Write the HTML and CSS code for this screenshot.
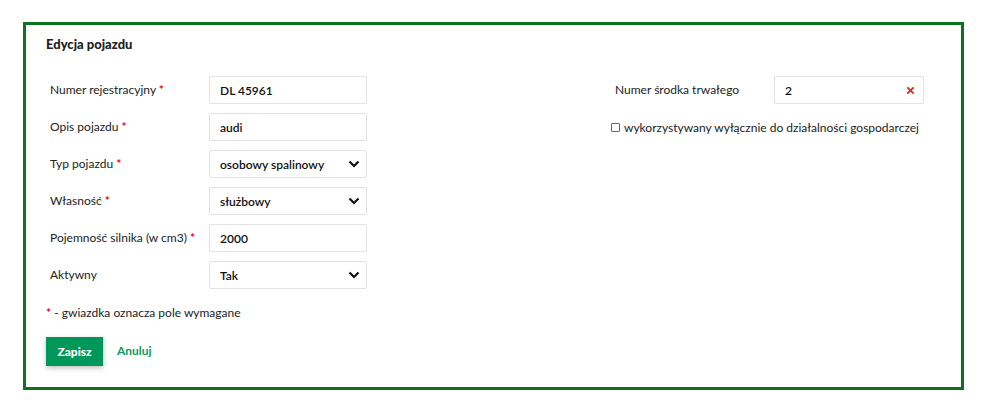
FILE: index.html
```html
<!DOCTYPE html>
<html lang="pl">
<head>
<meta charset="utf-8">
<link rel="stylesheet" href="styles.css">
</head>
<body>
<div class="panel">
  <h2 class="title">Edycja pojazdu</h2>
  <div class="form">
    <div class="col">
      <div class="row"><label class="lbl">Numer rejestracyjny <span class="req">*</span></label><div class="field">DL 45961</div></div>
      <div class="row"><label class="lbl">Opis pojazdu <span class="req">*</span></label><div class="field">audi</div></div>
      <div class="row"><label class="lbl">Typ pojazdu <span class="req">*</span></label><div class="field select">osobowy spalinowy<svg class="chev" viewBox="0 0 12 8" width="12" height="8"><path d="M1.5 1.5 L6 6 L10.5 1.5" fill="none" stroke="#111" stroke-width="2.2"/></svg></div></div>
      <div class="row"><label class="lbl">Własność <span class="req">*</span></label><div class="field select">służbowy<svg class="chev" viewBox="0 0 12 8" width="12" height="8"><path d="M1.5 1.5 L6 6 L10.5 1.5" fill="none" stroke="#111" stroke-width="2.2"/></svg></div></div>
      <div class="row"><label class="lbl">Pojemność silnika (w cm3) <span class="req">*</span></label><div class="field">2000</div></div>
      <div class="row"><label class="lbl">Aktywny</label><div class="field select">Tak<svg class="chev" viewBox="0 0 12 8" width="12" height="8"><path d="M1.5 1.5 L6 6 L10.5 1.5" fill="none" stroke="#111" stroke-width="2.2"/></svg></div></div>
    </div>
    <div class="col right">
      <div class="row"><label class="lbl">Numer środka trwałego</label><div class="field narrow">2<svg class="clear" viewBox="0 0 10 10" width="9" height="9"><path d="M1.5 1.5 L8.5 8.5 M8.5 1.5 L1.5 8.5" stroke="#e8271e" stroke-width="2"/></svg></div></div>
      <div class="check"><span class="box"></span>wykorzystywany wyłącznie do działalności gospodarczej</div>
    </div>
  </div>
  <p class="note"><span class="req">*</span> - gwiazdka oznacza pole wymagane</p>
  <div class="actions">
    <button class="btn">Zapisz</button>
    <a class="cancel">Anuluj</a>
  </div>
</div>
</body>
</html>
```
FILE: styles.css
```css
* { box-sizing: border-box; }
body {
  margin: 0;
  font-family: Lato, "Open Sans", sans-serif;
  font-size: 12px;
  color: #1b1b1b;
  background: #fff;
}
.panel {
  margin: 22px 0 0 23px;
  width: 941px;
  height: 368px;
  border: 3px solid #0b7222;
  padding: 11px 20px 0 20px;
}
.title {
  margin: 0;
  font-size: 13px;
  font-weight: 900;
  line-height: 16px;
  color: #222;
}
.form {
  display: flex;
  margin-top: 24px;
}
.col {
  display: flex;
  flex-direction: column;
  gap: 9px;
  padding-left: 4px;
  width: 565px;
}
.col.right { padding-left: 4px; width: auto; }
.row {
  display: flex;
  align-items: center;
  height: 28px;
}
.lbl {
  width: 159px;
  padding-bottom: 2px;
  color: #222;
}
.req { color: #e30613; font-weight: 700; }
.field {
  width: 158px;
  height: 28px;
  border: 1px solid #e2e2e2;
  border-radius: 2px;
  padding: 0 10px;
  display: flex;
  align-items: center;
  justify-content: space-between;
  font-weight: 600;
  color: #111;
}
.field.narrow { width: 150px; }
.chev { margin-right: -4px; }
.clear { margin-right: -2px; }
.check {
  display: flex;
  align-items: center;
  margin-left: -4px;
  margin-top: 7px;
  line-height: 16px;
  color: #222;
}
.box {
  width: 9px;
  height: 9px;
  border: 1px solid #666;
  border-radius: 1px;
  margin-right: 4px;
  margin-top: -1px;
}
.note {
  margin: 16px 0 0 0;
  line-height: 16px;
}
.actions {
  display: flex;
  align-items: center;
  margin-top: 16px;
  gap: 14px;
}
.btn {
  width: 57px;
  height: 29px;
  border: 0;
  background: #00975a;
  color: #fff;
  font-family: inherit;
  font-size: 12px;
  font-weight: 900;
  box-shadow: 0 2px 5px rgba(0,0,0,0.25);
  padding: 0;
}
.cancel {
  color: #0e9a5e;
  font-weight: 700;
  margin-top: -2px;
}
```
